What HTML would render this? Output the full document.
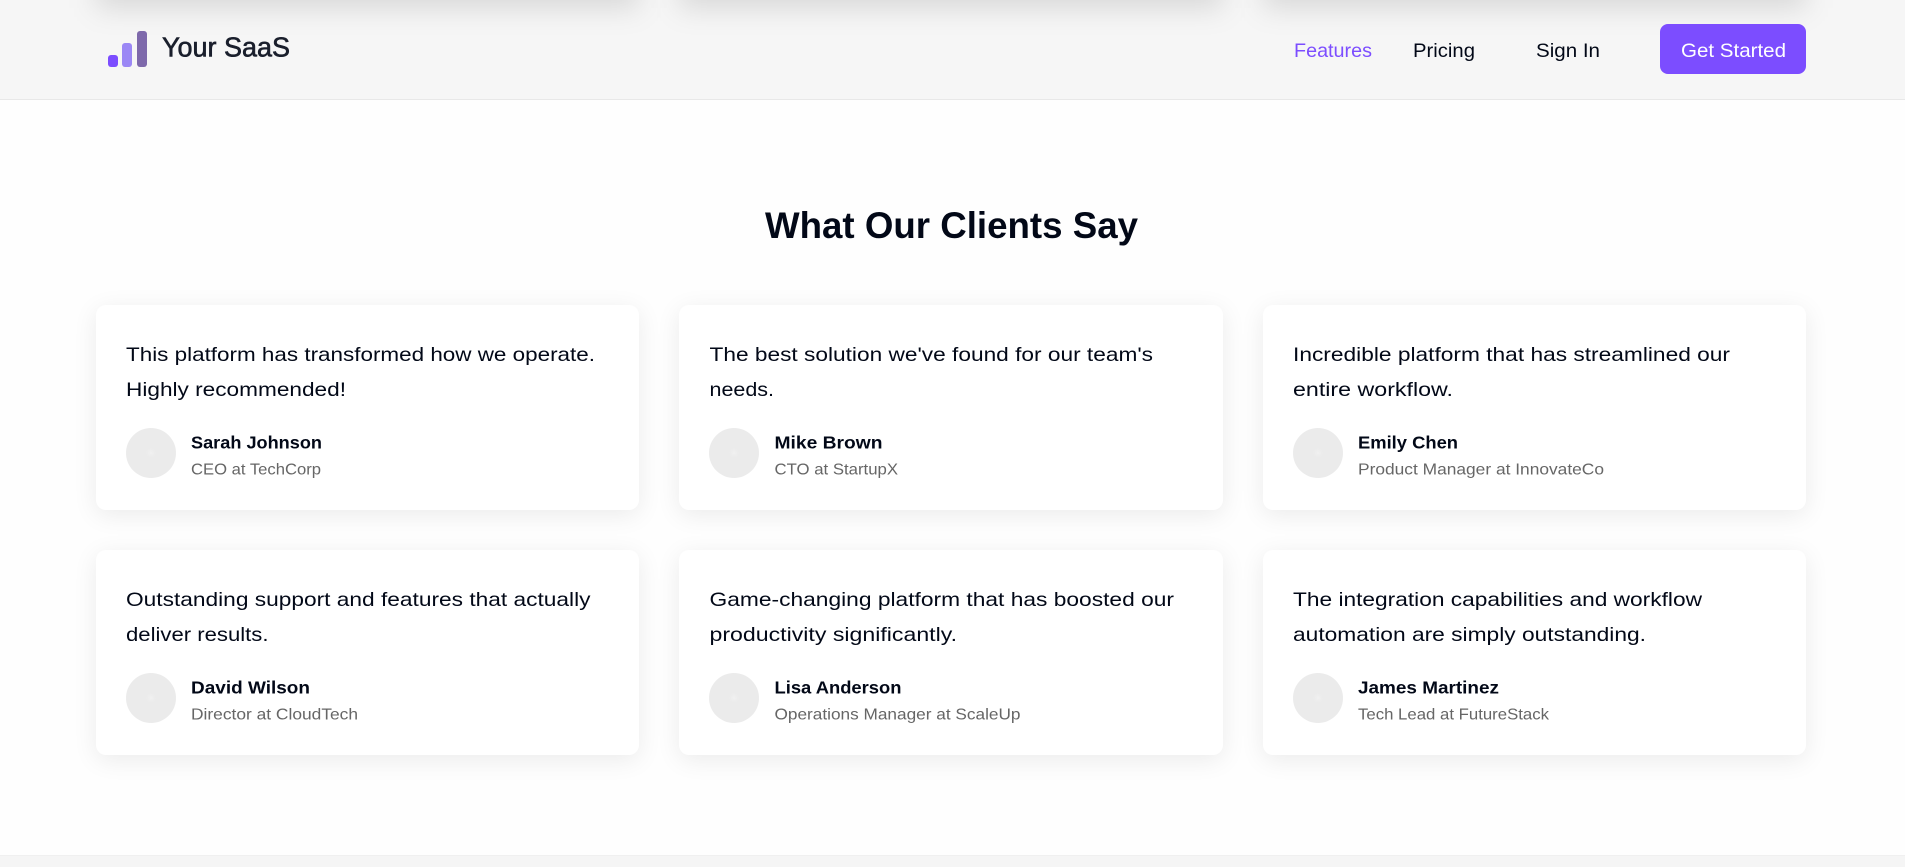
<!DOCTYPE html>
<html lang="en"><head><meta charset="utf-8"><title>Your SaaS</title>
<style>
html,body{margin:0;padding:0;width:1905px;height:867px;overflow:hidden;background:#fefefe;font-family:"Liberation Sans",sans-serif}
.nav{position:absolute;left:0;top:0;width:1905px;height:99px;background:#f6f6f6;border-bottom:1px solid #e8e8e8;overflow:hidden}
.sh{position:absolute;top:-28px;height:36px;background:rgba(0,0,0,.12);filter:blur(14px)}
.bar{position:absolute;border-radius:3px}
.btn{position:absolute;left:1660px;top:24px;width:146px;height:50px;background:#7c4dff;border-radius:8px}
.card{position:absolute;width:543.33px;height:205px;background:#fff;border-radius:10px;box-shadow:0 5px 25px rgba(0,0,0,.08)}
.av{position:absolute;left:30px;top:123px;width:50px;height:50px;border-radius:50%;background:radial-gradient(circle,#f1f1f1 0,#eeeeee 2px,#ebebeb 5px)}
.foot{position:absolute;left:0;top:855px;width:1905px;height:12px;background:#f5f5f5;border-top:1px solid #f0f0f0;box-sizing:border-box}
svg{position:absolute;left:0;top:0}
text{font-family:"Liberation Sans",sans-serif}
.q{font-size:19.5px;fill:#020817}
.n{font-size:17.6px;font-weight:700;fill:#020817}
.r{font-size:16px;fill:#666}
.l{font-size:19.5px;fill:#020817}
</style></head><body>
<div class="card" style="left:96px;top:305px"><div class="av"></div></div>
<div class="card" style="left:679.33px;top:305px"><div class="av"></div></div>
<div class="card" style="left:1262.67px;top:305px"><div class="av"></div></div>
<div class="card" style="left:96px;top:550px"><div class="av"></div></div>
<div class="card" style="left:679.33px;top:550px"><div class="av"></div></div>
<div class="card" style="left:1262.67px;top:550px"><div class="av"></div></div>
<div class="foot"></div>
<div class="nav">
<div class="sh" style="left:96px;width:543px"></div>
<div class="sh" style="left:679px;width:544px"></div>
<div class="sh" style="left:1263px;width:543px"></div>
<div class="bar" style="left:108px;top:55px;width:10px;height:12px;background:#7c4dff"></div>
<div class="bar" style="left:122px;top:43px;width:10px;height:24px;background:#9b87f5"></div>
<div class="bar" style="left:136.5px;top:31px;width:10px;height:36px;background:#7e69ab"></div>
<div class="btn"></div>
</div>
<svg width="1905" height="867" xmlns="http://www.w3.org/2000/svg">
<text x="162" y="56.5" font-size="27.5" fill="#1a1f2c" stroke="#1a1f2c" stroke-width=".6" textLength="128" lengthAdjust="spacingAndGlyphs">Your SaaS</text>
<text class="l" x="1294" y="57" style="fill:#7c4dff" textLength="78" lengthAdjust="spacingAndGlyphs">Features</text>
<text class="l" x="1413" y="57" textLength="62" lengthAdjust="spacingAndGlyphs">Pricing</text>
<text class="l" x="1536" y="57" textLength="64" lengthAdjust="spacingAndGlyphs">Sign In</text>
<text class="l" x="1681" y="57" style="fill:#fff" textLength="105" lengthAdjust="spacingAndGlyphs">Get Started</text>
<text x="765" y="238" font-size="37.5" font-weight="700" fill="#020817" textLength="373" lengthAdjust="spacingAndGlyphs">What Our Clients Say</text>

<text class="q" x="126" y="361" textLength="469" lengthAdjust="spacingAndGlyphs">This platform has transformed how we operate.</text>
<text class="q" x="126" y="396" textLength="220" lengthAdjust="spacingAndGlyphs">Highly recommended!</text>
<text class="n" x="191" y="448.5" textLength="131" lengthAdjust="spacingAndGlyphs">Sarah Johnson</text>
<text class="r" x="191" y="474.5" textLength="130" lengthAdjust="spacingAndGlyphs">CEO at TechCorp</text>

<text class="q" x="709.5" y="361" textLength="443.5" lengthAdjust="spacingAndGlyphs">The best solution we've found for our team's</text>
<text class="q" x="709.5" y="396" textLength="64.5" lengthAdjust="spacingAndGlyphs">needs.</text>
<text class="n" x="774.5" y="448.5" textLength="108" lengthAdjust="spacingAndGlyphs">Mike Brown</text>
<text class="r" x="774.5" y="474.5" textLength="123.5" lengthAdjust="spacingAndGlyphs">CTO at StartupX</text>

<text class="q" x="1293" y="361" textLength="437" lengthAdjust="spacingAndGlyphs">Incredible platform that has streamlined our</text>
<text class="q" x="1293" y="396" textLength="160" lengthAdjust="spacingAndGlyphs">entire workflow.</text>
<text class="n" x="1358" y="448.5" textLength="100" lengthAdjust="spacingAndGlyphs">Emily Chen</text>
<text class="r" x="1358" y="474.5" textLength="246" lengthAdjust="spacingAndGlyphs">Product Manager at InnovateCo</text>

<text class="q" x="126" y="606" textLength="464.5" lengthAdjust="spacingAndGlyphs">Outstanding support and features that actually</text>
<text class="q" x="126" y="641" textLength="142.5" lengthAdjust="spacingAndGlyphs">deliver results.</text>
<text class="n" x="191" y="693.5" textLength="119" lengthAdjust="spacingAndGlyphs">David Wilson</text>
<text class="r" x="191" y="719.5" textLength="167" lengthAdjust="spacingAndGlyphs">Director at CloudTech</text>

<text class="q" x="709.5" y="606" textLength="464.5" lengthAdjust="spacingAndGlyphs">Game-changing platform that has boosted our</text>
<text class="q" x="709.5" y="641" textLength="247.5" lengthAdjust="spacingAndGlyphs">productivity significantly.</text>
<text class="n" x="774.5" y="693.5" textLength="127" lengthAdjust="spacingAndGlyphs">Lisa Anderson</text>
<text class="r" x="774.5" y="719.5" textLength="246" lengthAdjust="spacingAndGlyphs">Operations Manager at ScaleUp</text>

<text class="q" x="1293" y="606" textLength="409" lengthAdjust="spacingAndGlyphs">The integration capabilities and workflow</text>
<text class="q" x="1293" y="641" textLength="353" lengthAdjust="spacingAndGlyphs">automation are simply outstanding.</text>
<text class="n" x="1358" y="693.5" textLength="141" lengthAdjust="spacingAndGlyphs">James Martinez</text>
<text class="r" x="1358" y="719.5" textLength="191" lengthAdjust="spacingAndGlyphs">Tech Lead at FutureStack</text>
</svg>
</body></html>
